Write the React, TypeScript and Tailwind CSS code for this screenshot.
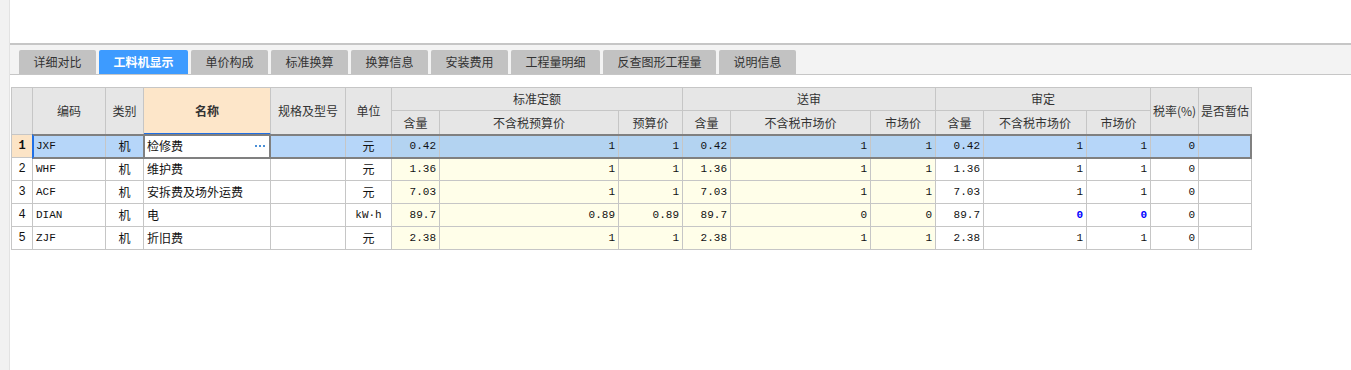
import type { ReactNode } from "react";

// 顶部页签
const tabs = [
  { label: "详细对比", width: "w-[77px]" },
  { label: "工料机显示", width: "w-[89px]", active: true },
  { label: "单价构成", width: "w-[77px]" },
  { label: "标准换算", width: "w-[77px]" },
  { label: "换算信息", width: "w-[77px]" },
  { label: "安装费用", width: "w-[77px]" },
  { label: "工程量明细", width: "w-[89px]" },
  { label: "反查图形工程量", width: "w-[113px]" },
  { label: "说明信息", width: "w-[77px]" },
];

type Row = {
  no: number;
  code: string;
  name: string;
  unit: string;
  values: string[];
  tax: string;
  blue?: number[];
};

const rows: Row[] = [
  { no: 1, code: "JXF", name: "检修费", unit: "元", values: ["0.42", "1", "1", "0.42", "1", "1", "0.42", "1", "1"], tax: "0" },
  { no: 2, code: "WHF", name: "维护费", unit: "元", values: ["1.36", "1", "1", "1.36", "1", "1", "1.36", "1", "1"], tax: "0" },
  { no: 3, code: "ACF", name: "安拆费及场外运费", unit: "元", values: ["7.03", "1", "1", "7.03", "1", "1", "7.03", "1", "1"], tax: "0" },
  { no: 4, code: "DIAN", name: "电", unit: "kW·h", values: ["89.7", "0.89", "0.89", "89.7", "0", "0", "89.7", "0", "0"], tax: "0", blue: [7, 8] },
  { no: 5, code: "ZJF", name: "折旧费", unit: "元", values: ["2.38", "1", "1", "2.38", "1", "1", "2.38", "1", "1"], tax: "0" },
];

const cjk = "font-['Noto_Sans_CJK_SC','Noto_Sans',sans-serif]";
const mono = "font-['Liberation_Mono','DejaVu_Sans_Mono',monospace]";
const line = "border-r border-b border-[#c6c6c6]";

function Head({ children, className = "" }: { children?: ReactNode; className?: string }) {
  return (
    <div className={`${line} flex items-center justify-center bg-[#e6e6e6] text-[12px] ${className}`}>
      {children}
    </div>
  );
}

function Cell({
  children,
  className = "",
  color = "text-[#111]",
}: {
  children?: ReactNode;
  className?: string;
  color?: string;
}) {
  return (
    <div className={`${line} flex items-center overflow-hidden whitespace-nowrap ${color} ${className}`}>
      {children}
    </div>
  );
}

const App = () => {
  return (
    <div className={`flex min-h-[370px] w-full bg-white ${cjk}`}>
      <div className="w-[10px] shrink-0 border-r border-[#e2e2e2] bg-[#f1f1f1]" />

      <div className="flex flex-1 flex-col">
        <div className="h-[43px]" />

        <div className="flex h-[32px] items-end gap-[3px] border-t-2 border-b border-[#c6c6c6] bg-[#f3f3f3] pl-[9px]">
          {tabs.map((tab) => (
            <div
              key={tab.label}
              className={`flex h-[24px] items-center justify-center rounded-t-[2px] text-[12px] ${tab.width} ${
                tab.active ? "bg-[#3d9bff] font-bold text-white" : "bg-[#c2c2c2] text-[#333]"
              }`}
            >
              {tab.label}
            </div>
          ))}
        </div>

        <div className="relative ml-[1px] mt-[12px] w-max">
          <div className="grid grid-cols-[21px_73px_38px_127px_75px_46px_48px_179px_64px_48px_140px_65px_48px_103px_64px_48px_53px] grid-rows-[23px_24px_23px_23px_23px_23px_23px] border-l border-t border-[#c6c6c6] text-[#333]">
            <Head className="row-span-2" />
            <Head className="row-span-2">编码</Head>
            <Head className="row-span-2">类别</Head>
            <Head className="row-span-2 border-b-2 border-b-[#1f6fe5] bg-[#fde6c9] font-bold">名称</Head>
            <Head className="row-span-2">规格及型号</Head>
            <Head className="row-span-2">单位</Head>
            <Head className="col-span-3">标准定额</Head>
            <Head className="col-span-3">送审</Head>
            <Head className="col-span-3">审定</Head>
            <Head className="row-span-2">税率(%)</Head>
            <Head className="row-span-2">是否暂估</Head>
            <Head>含量</Head>
            <Head>不含税预算价</Head>
            <Head>预算价</Head>
            <Head>含量</Head>
            <Head>不含税市场价</Head>
            <Head>市场价</Head>
            <Head>含量</Head>
            <Head>不含税市场价</Head>
            <Head>市场价</Head>

            {rows.map((row) => {
              const selected = row.no === 1;
              const bg = selected ? "bg-[#b6d6f9]" : "bg-white";
              const yellow = selected ? "bg-[#b3d3f1]" : "bg-[#fffee9]";

              return [
                <Cell
                  key={`${row.no}-no`}
                  className={`justify-center text-[12px] ${mono} ${selected ? "bg-[#fce4c6] font-bold" : "bg-white"}`}
                >
                  {row.no}
                </Cell>,
                <Cell key={`${row.no}-code`} className={`pl-[3px] text-[11px] ${mono} ${bg}`}>
                  {row.code}
                </Cell>,
                <Cell key={`${row.no}-cat`} className={`justify-center text-[12px] ${bg}`}>
                  机
                </Cell>,
                <Cell key={`${row.no}-name`} className="justify-between bg-white pl-[3px] pr-[5px] text-[12px]">
                  <span>{row.name}</span>
                  {selected && (
                    <span className="flex gap-[2px]">
                      <span className="h-[2px] w-[2px] bg-[#4a8fd6]" />
                      <span className="h-[2px] w-[2px] bg-[#4a8fd6]" />
                      <span className="h-[2px] w-[2px] bg-[#4a8fd6]" />
                    </span>
                  )}
                </Cell>,
                <Cell key={`${row.no}-spec`} className={bg} />,
                <Cell
                  key={`${row.no}-unit`}
                  className={`justify-center ${row.unit === "元" ? "text-[12px]" : `text-[11px] ${mono}`} ${bg}`}
                >
                  {row.unit}
                </Cell>,
                ...row.values.map((value, index) => {
                  const isBlue = row.blue?.includes(index);
                  return (
                    <Cell
                      key={`${row.no}-v${index}`}
                      color={isBlue ? "text-[#0000ff]" : "text-[#111]"}
                      className={`justify-end pr-[3px] text-[11px] ${mono} ${index < 6 ? yellow : bg} ${
                        isBlue ? "font-bold" : ""
                      }`}
                    >
                      {value}
                    </Cell>
                  );
                }),
                <Cell key={`${row.no}-tax`} className={`justify-end pr-[3px] text-[11px] ${mono} ${bg}`}>
                  {row.tax}
                </Cell>,
                <Cell key={`${row.no}-est`} className={bg} />,
              ];
            })}
          </div>

          {/* 当前选中行和当前单元格的框线 */}
          <div className="pointer-events-none absolute left-[21px] top-[47px] h-[25px] w-[1220px] border-2 border-[#808080] border-l-[#1f6fe5]" />
          <div className="pointer-events-none absolute left-[132px] top-[47px] h-[25px] w-[128px] border-2 border-[#808080]" />
        </div>
      </div>
    </div>
  );
};

export default App;
